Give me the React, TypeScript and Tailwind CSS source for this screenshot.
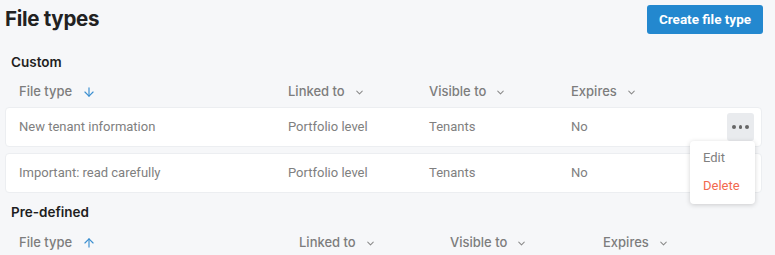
import { ArrowDown, ArrowUp, ChevronDown } from "lucide-react";

const heading = { fontFamily: "Inter, 'Noto Sans', sans-serif" };
const body = { fontFamily: "Roboto, 'Liberation Sans', sans-serif" };

interface IRow {
    name: string,
    linked: string,
    visible: string,
    expires: string,
    menu?: boolean
}

const customRows: IRow[] = [
    { name: "New tenant information", linked: "Portfolio level", visible: "Tenants", expires: "No", menu: true },
    { name: "Important: read carefully", linked: "Portfolio level", visible: "Tenants", expires: "No" },
];

function HeaderCell({label}:{label: string}){
    return(
        <div className="flex items-center gap-[9px]">
            <span>{label}</span>
            <ChevronDown size={11} strokeWidth={2.2} className="text-[#8a8a8a]" />
        </div>
    );
}

function TableHeader({cols, up}:{cols: string, up?: boolean}){
    return(
        <div
            className={`grid ${cols} px-[14px] h-[30px] items-center text-[13px] font-medium text-[#7d7d7d]`}
            style={heading}
        >
            <div className="flex items-center gap-[10px]">
                <span>File type</span>
                {up
                    ? <ArrowUp size={14} strokeWidth={2} className="text-[#3b8fd0]" />
                    : <ArrowDown size={14} strokeWidth={2} className="text-[#3b8fd0]" />}
            </div>
            <HeaderCell label="Linked to" />
            <HeaderCell label="Visible to" />
            <HeaderCell label="Expires" />
        </div>
    );
}

function Row({row}:{row: IRow}){
    return(
        <div className="relative h-[40px] bg-white border border-[#eceef1] rounded-[4px]">
            <div
                className="grid grid-cols-[269px_141px_142px_1fr] items-center h-full px-[13px] text-[13px] text-[#808080]"
                style={body}
            >
                <span>{row.name}</span>
                <span>{row.linked}</span>
                <span>{row.visible}</span>
                <span>{row.expires}</span>
            </div>
            {row.menu && (
                <>
                    <div className="absolute right-[7px] top-[5px] w-[27px] h-[28px] rounded-[3px] bg-[#e9ebee] flex items-center justify-center gap-[3px]">
                        <span className="w-[3.5px] h-[3.5px] rounded-full bg-[#666]" />
                        <span className="w-[3.5px] h-[3.5px] rounded-full bg-[#666]" />
                        <span className="w-[3.5px] h-[3.5px] rounded-full bg-[#666]" />
                    </div>
                    <div
                        className="absolute z-10 right-[6px] top-[33px] w-[65px] h-[63px] bg-white rounded-[4px] shadow-[0_1px_5px_rgba(0,0,0,0.18)] flex flex-col pl-[13px] pt-[8px] gap-[10px] text-[13px]"
                        style={body}
                    >
                        <span className="text-[#808080] leading-[18px]">Edit</span>
                        <span className="text-[#f2694f] leading-[18px]">Delete</span>
                    </div>
                </>
            )}
        </div>
    );
}

function App(){
    return(
        <div className="w-[775px] h-[255px] overflow-hidden bg-[#f6f7f9] pl-[5px] pr-[13px]">
            <div className="flex items-center justify-between h-[37px] pt-[1px]">
                <h1 className="text-[20.5px] font-bold text-[#222] tracking-[-0.3px]" style={heading}>File types</h1>
                <button
                    className="h-[29px] w-[116px] mr-[-1px] rounded-[3px] bg-[#2388cf] text-white text-[13.5px] font-bold"
                    style={body}
                >
                    Create file type
                </button>
            </div>
            <h2 className="pl-[6px] mt-[15px] text-[13.5px] font-semibold text-[#1f1f1f] leading-[20px]" style={heading}>Custom</h2>
            <div className="mt-[5px]">
                <TableHeader cols="grid-cols-[269px_141px_142px_1fr]" />
            </div>
            <div className="flex flex-col gap-[6px]">
                {customRows.map((row) => <Row key={row.name} row={row} />)}
            </div>
            <h2 className="pl-[6px] mt-[9px] text-[13.5px] font-semibold text-[#1f1f1f] leading-[20px]" style={heading}>Pre-defined</h2>
            <div className="mt-[6px]">
                <TableHeader cols="grid-cols-[280px_151px_153px_1fr]" up />
            </div>
        </div>
    );
}

export default App;
